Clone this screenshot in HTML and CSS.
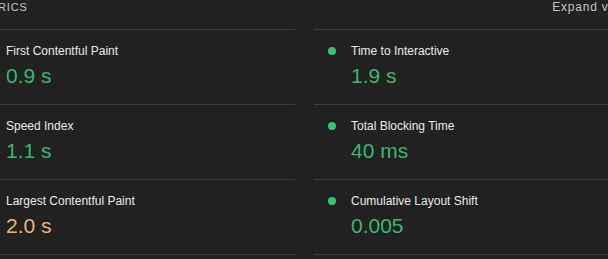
FILE: index.html
```html
<!DOCTYPE html>
<html lang="en">
<head>
  <meta charset="UTF-8">
  <title>Metrics</title>
  <link rel="stylesheet" href="styles.css">
</head>
<body>

  <div class="metrics">
    <div class="metrics-header">
      <span class="metrics-title">Metrics</span>
      <span class="metrics-toggle">Expand view</span>
    </div>

    <div class="metrics-grid">
      <div class="metric">
        <span class="dot pass"></span>
        <div class="metric-label">First Contentful Paint</div>
        <div class="metric-value pass">0.9 s</div>
      </div>
      <div class="metric">
        <span class="dot pass"></span>
        <div class="metric-label">Time to Interactive</div>
        <div class="metric-value pass">1.9 s</div>
      </div>
      <div class="metric">
        <span class="dot pass"></span>
        <div class="metric-label">Speed Index</div>
        <div class="metric-value pass">1.1 s</div>
      </div>
      <div class="metric">
        <span class="dot pass"></span>
        <div class="metric-label">Total Blocking Time</div>
        <div class="metric-value pass">40 ms</div>
      </div>
      <div class="metric">
        <span class="dot average"></span>
        <div class="metric-label">Largest Contentful Paint</div>
        <div class="metric-value average">2.0 s</div>
      </div>
      <div class="metric">
        <span class="dot pass"></span>
        <div class="metric-label">Cumulative Layout Shift</div>
        <div class="metric-value pass">0.005</div>
      </div>
    </div>
  </div>

</body>
</html>
```

FILE: styles.css
```css
html, body {
  margin: 0;
  background: #212121;
  overflow: hidden;
}
body {
  font-family: "Liberation Sans", Arial, sans-serif;
  color: #e6e6e6;
}
.metrics {
  width: 671px;
  margin-left: -31px;
}
.metrics-header {
  display: flex;
  justify-content: space-between;
  padding: 0 0 15px 3px;
  font-size: 11px;
  line-height: 14px;
  letter-spacing: 0.9px;
  color: #c4c4c4;
}
.metrics-title {
  text-transform: uppercase;
}
.metrics-toggle {
  font-size: 12px;
  letter-spacing: 0.8px;
  padding-right: 11px;
}
.metrics-grid {
  display: grid;
  grid-template-columns: 326px 326px;
  column-gap: 19px;
}
.metric {
  display: grid;
  grid-template-columns: 8px 1fr;
  column-gap: 15px;
  row-gap: 3px;
  align-items: center;
  padding: 12px 0 15px 14px;
  border-top: 1px solid #3c3c3c;
  height: 47px;
}
.metric:nth-last-child(-n+2) {
  border-bottom: 1px solid #3c3c3c;
}
.dot {
  width: 8px;
  height: 8px;
  border-radius: 50%;
}
.dot.pass {
  background: #2fc86f;
}
.dot.average {
  background: #e8a33a;
}
.metric-label {
  font-size: 12px;
  line-height: 18px;
  color: #e8e8e8;
}
.metric-value {
  grid-column: 2;
  font-size: 21px;
  line-height: 26px;
}
.metric-value.pass {
  color: #32b96c;
}
.metric-value.average {
  color: #e9b66f;
}
```
